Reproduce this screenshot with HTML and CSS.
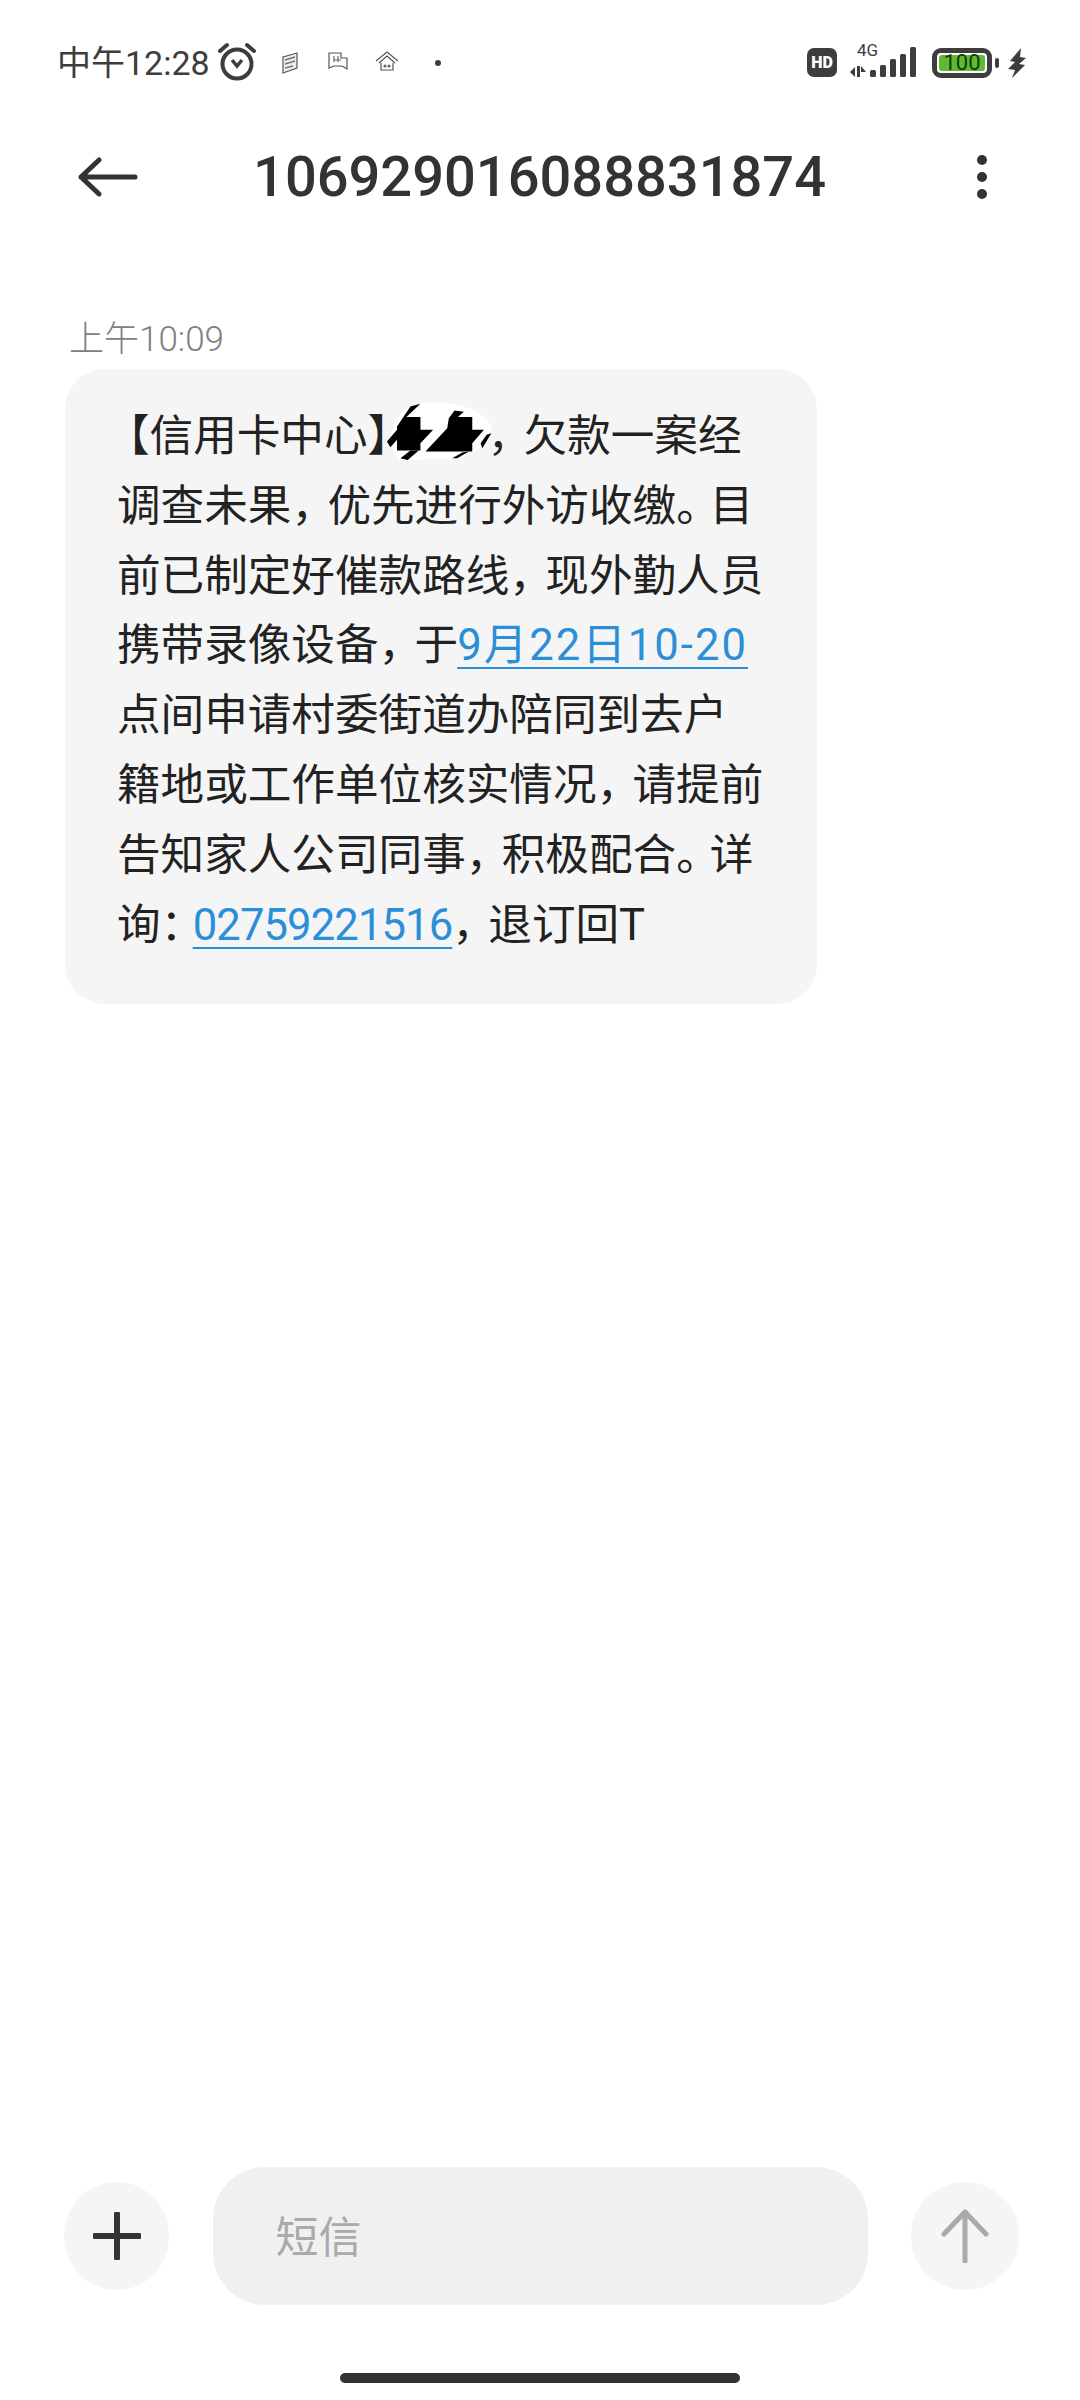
FILE: index.html
```html
<!DOCTYPE html>
<html lang="zh-CN">
<head>
	<meta charset="UTF-8">
	<title>短信</title>
	<link rel="stylesheet" href="styles.css">
</head>
<body>
	<div class="status">
		<span class="clock">中午12:28</span>
		<svg class="alarm" width="40" height="40" viewBox="0 0 40 40">
			<circle cx="20" cy="22" r="14.5" fill="none" stroke="#3d3d3d" stroke-width="4"/>
			<path d="M15 18l5 6 5-6" fill="none" stroke="#3d3d3d" stroke-width="3.5"/>
			<path d="M3 9l7-6M37 9l-7-6" fill="none" stroke="#3d3d3d" stroke-width="4" stroke-linecap="round"/>
		</svg>
		<svg class="note note-a" width="18" height="24" viewBox="0 0 18 24">
			<path d="M2 6l14-4v15L2 22z" fill="#eee" stroke="#555" stroke-width="1.2"/>
			<path d="M4 9l10-3M4 13l10-3M4 17l8-2" stroke="#777" stroke-width="1.6"/>
		</svg>
		<svg class="note note-b" width="20" height="20" viewBox="0 0 20 20">
			<path d="M1 2h12v5h6v11l-5-3H6l-5 2z" fill="none" stroke="#555" stroke-width="1.2"/>
			<path d="M6 5v6M10 5v6M6 9h7" stroke="#666" stroke-width="1.2"/>
		</svg>
		<svg class="note note-c" width="24" height="20" viewBox="0 0 24 20">
			<path d="M1 10L12 1l11 9M4 12L12 5l8 7M6 12v7h12v-7" fill="none" stroke="#555" stroke-width="1.2"/>
			<circle cx="10" cy="15" r="1.6" fill="#666"/>
			<circle cx="14" cy="15" r="1.6" fill="#666"/>
		</svg>
		<span class="dot"></span>
		<span class="spacer"></span>
		<span class="hd">HD</span>
		<div class="signal">
			<span class="net">4G</span>
			<svg width="66" height="32" viewBox="0 0 66 32">
				<path d="M0 26l5-5v10zM7 20h3v11H7zM11 20l5 6h-5z" fill="#3d3d3d"/>
				<rect x="20" y="24" width="6" height="7" rx="1.500" fill="#3d3d3d"/>
				<rect x="30" y="19" width="6" height="12" rx="1.500" fill="#3d3d3d"/>
				<rect x="40" y="13" width="6" height="18" rx="1.500" fill="#3d3d3d"/>
				<rect x="50" y="8" width="6" height="23" rx="1.500" fill="#3d3d3d"/>
				<rect x="60" y="1" width="6" height="30" rx="1.500" fill="#3d3d3d"/>
			</svg>
		</div>
		<div class="battery"><span class="level">100</span></div>
		<span class="nub"></span>
		<svg class="bolt" width="18" height="30" viewBox="0 0 18 30">
			<path d="M13 0L2 13l5 1-7 7 7 1-3 8 13-13-6-1 7-6-6-1z" fill="#3d3d3d"/>
		</svg>
	</div>

	<div class="header">
		<svg class="back" width="60" height="40" viewBox="0 0 60 40">
			<path d="M57 20H3M21 3L3 20l18 17" fill="none" stroke="#333" stroke-width="5" stroke-linecap="round" stroke-linejoin="round"/>
		</svg>
		<h1 class="number">106929016088831874</h1>
		<div class="more"><i></i><i></i><i></i></div>
	</div>

	<div class="thread">
		<div class="time">上午10:09</div>
		<div class="bubble"><span class="lb">【</span>信用卡中心<span class="rb">】</span><svg class="mask" width="107" height="57" viewBox="60 40 320 170">
				<path d="M90 90C110 50 150 35 200 40C270 35 350 60 372 110C375 150 330 190 280 205L100 210C70 180 60 140 90 90z" fill="#fff"/>
				<path d="M90 110L130 50L160 42L118 82H160V120H198L160 160V182H90V150L70 172L60 155L90 120z" fill="#000"/>
				<path d="M100 205L130 182H155L122 210z" fill="#000"/>
				<path d="M245 85L262 62L290 66L272 82H315V120H350L315 160V185H175L240 115z" fill="#000"/>
				<path d="M255 205L285 188L305 185L270 205z" fill="#000"/>
				<path d="M340 160L358 135L372 130L345 175z" fill="#000"/>
			</svg><span class="cm">，</span>欠款一案经<br>调查未果<span class="cm">，</span>优先进行外访收缴<span class="jh">。</span>目<br>前已制定好催款路线<span class="cm">，</span>现外勤人员<br>携带录像设备<span class="cm">，</span>于<a class="link date">9月22日10-20</a><br>点间申请村委街道办陪同到去户<br>籍地或工作单位核实情况<span class="cm">，</span>请提前<br>告知家人公司同事<span class="cm">，</span>积极配合<span class="jh">。</span>详<br>询<span class="cn">：</span><a class="link tel">02759221516</a><span class="cm">，</span>退订回T</div>
	</div>

	<div class="composer">
		<div class="round round-add">
			<svg width="48" height="48" viewBox="0 0 48 48">
				<path d="M24 2v44M2 24h44" stroke="#333" stroke-width="6" stroke-linecap="round"/>
			</svg>
		</div>
		<div class="input">短信</div>
		<div class="round">
			<svg width="48" height="54" viewBox="0 0 48 54">
				<path d="M24 52V3M3 25L24 3l21 22" fill="none" stroke="#aaa" stroke-width="5" stroke-linecap="round" stroke-linejoin="round"/>
			</svg>
		</div>
	</div>

	<div class="home"><span class="bar"></span></div>
</body>
</html>
```

FILE: styles.css
```css
*{
	margin: 0;
	padding: 0;
	box-sizing: border-box;
}
body{
	width: 1080px;
	height: 2400px;
	background: #fff;
	display: flex;
	flex-direction: column;
	font-family: Roboto, "Noto Sans CJK SC", sans-serif;
	color: #222;
	overflow: hidden;
}
.status{
	height: 124px;
	padding: 42px 54px 0 57px;
	display: flex;
	align-items: flex-start;
	color: #3d3d3d;
}
.clock{
	font-size: 34px;
	line-height: 42px;
	font-weight: 400;
	width: 159px;
	white-space: nowrap;
}
.alarm{
	margin: 0 0 0 1px;
}
.note{
	margin-top: 9px;
}
.note-a{
	margin-left: 24px;
}
.note-b{
	margin-left: 29px;
}
.note-c{
	margin-left: 27px;
}
.dot{
	width: 6px;
	height: 6px;
	border-radius: 50%;
	background: #3d3d3d;
	margin: 18px 0 0 36px;
}
.spacer{
	flex: 1;
}
.hd{
	width: 30px;
	height: 29px;
	margin-top: 6px;
	border-radius: 7px;
	background: #3d3d3d;
	color: #fff;
	font-size: 16px;
	font-weight: 900;
	line-height: 29px;
	text-align: center;
}
.signal{
	width: 66px;
	height: 32px;
	margin: 4px 0 0 13px;
	position: relative;
}
.net{
	position: absolute;
	left: 7px;
	top: -4px;
	font-size: 17px;
	line-height: 17px;
}
.signal svg{
	display: block;
}
.battery{
	width: 60px;
	height: 30px;
	margin: 6px 0 0 16px;
	border: 5px solid #3d3d3d;
	border-radius: 9px;
	padding: 2px;
}
.level{
	display: block;
	height: 16px;
	border-radius: 3px;
	background: #62b834;
	color: #0f3d05;
	font-size: 22px;
	line-height: 16px;
	text-align: center;
}
.nub{
	width: 4px;
	height: 10px;
	margin: 16px 0 0 3px;
	border-radius: 2px;
	background: #3d3d3d;
}
.bolt{
	margin: 6px 0 0 9px;
}
.header{
	height: 106px;
	padding: 0 93px 0 78px;
	display: flex;
	align-items: center;
}
.back{
	flex: none;
}
.number{
	flex: 1;
	text-align: center;
	font-size: 56px;
	font-weight: 500;
	color: #333;
	padding-right: 36px;
}
.more{
	flex: none;
	display: flex;
	flex-direction: column;
	gap: 7px;
}
.more i{
	display: block;
	width: 10px;
	height: 10px;
	border-radius: 50%;
	background: #333;
}
.thread{
	flex: 1;
	padding: 85px 0 0 65px;
}
.time{
	padding-left: 4px;
	font-size: 35px;
	line-height: 50px;
	font-weight: 300;
	color: #808080;
}
.bubble{
	width: 752px;
	height: 635px;
	margin-top: 4px;
	padding: 33px 0 0 52px;
	background: #f5f5f5;
	border-radius: 40px;
	font-size: 43.600px;
	line-height: 69.800px;
	color: #222;
	white-space: nowrap;
}
.lb{
	margin-left: -11px;
}
.rb{
	letter-spacing: -24.600px;
}
.cm{
	letter-spacing: -7.600px;
}
.jh{
	letter-spacing: -10px;
}
.cn{
	letter-spacing: -11.500px;
}
.mask{
	vertical-align: -9px;
	margin-right: -6px;
}
.link{
	color: #2b8fd8;
	text-decoration: underline;
	text-decoration-thickness: 2px;
	text-underline-offset: 7px;
}
.date{
	letter-spacing: 2px;
	margin-left: -1px;
}
.tel{
	letter-spacing: -0.900px;
}
.composer{
	height: 138px;
	padding: 0 61px 0 64px;
	display: flex;
	align-items: center;
	justify-content: space-between;
}
.round{
	width: 108px;
	height: 108px;
	border-radius: 50%;
	background: #f5f5f5;
	display: flex;
	align-items: center;
	justify-content: center;
}
.round-add{
	width: 105px;
}
.input{
	width: 655px;
	height: 138px;
	padding-left: 63px;
	border-radius: 52px;
	background: #f0f0f0;
	color: #aaa;
	font-size: 43px;
	line-height: 142px;
}
.home{
	height: 95px;
	display: flex;
	justify-content: center;
	padding-top: 68px;
}
.bar{
	width: 400px;
	height: 10px;
	border-radius: 5px;
	background: #333;
}
```
